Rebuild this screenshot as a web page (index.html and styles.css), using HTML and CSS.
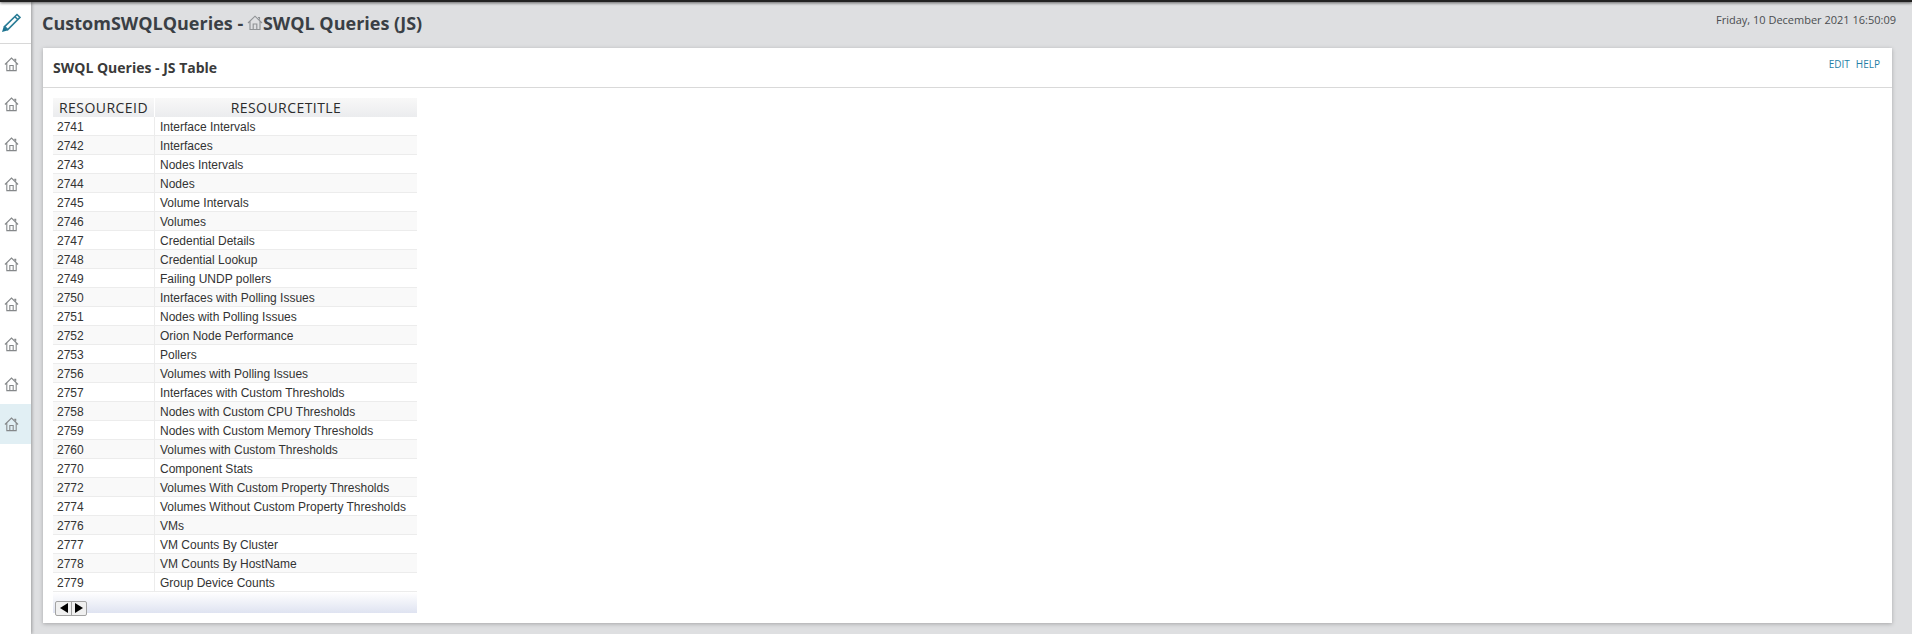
FILE: index.html
```html
<!DOCTYPE html>
<html lang="en">
<head>
<meta charset="utf-8">
<title>CustomSWQLQueries</title>
<link rel="stylesheet" href="styles.css">
</head>
<body>
<svg class="defs" width="0" height="0" aria-hidden="true">
  <symbol id="home" viewBox="0 0 16 16">
    <path d="M1 8 8 1.2 15 8M3 6.6V14.5H13V6.6M6.2 14.5V9H9.8V14.5M11 2.5H12.5V4.6" fill="none" stroke="currentColor" stroke-width="1.15"/>
  </symbol>
</svg>
<div class="topbar"></div>
<div class="app">
  <nav class="sidebar">
    <div class="logo">
      <svg width="20" height="20" viewBox="0 0 20 20" aria-hidden="true">
        <path d="M16 1.5 19 4.3 6.8 16.6 3.6 13.6Z" fill="#fff" stroke="#2b7d97" stroke-width="1.6"/>
        <path d="M13.8 3.7 16.8 6.5" stroke="#2b7d97" stroke-width="1.6"/>
        <path d="M1 19 2.8 13.2 7.2 17.2Z" fill="#1d7390"/>
      </svg>
    </div>
    <a class="nav-item"><svg class="home"><use href="#home"/></svg></a>
    <a class="nav-item"><svg class="home"><use href="#home"/></svg></a>
    <a class="nav-item"><svg class="home"><use href="#home"/></svg></a>
    <a class="nav-item"><svg class="home"><use href="#home"/></svg></a>
    <a class="nav-item"><svg class="home"><use href="#home"/></svg></a>
    <a class="nav-item"><svg class="home"><use href="#home"/></svg></a>
    <a class="nav-item"><svg class="home"><use href="#home"/></svg></a>
    <a class="nav-item"><svg class="home"><use href="#home"/></svg></a>
    <a class="nav-item"><svg class="home"><use href="#home"/></svg></a>
    <a class="nav-item active"><svg class="home"><use href="#home"/></svg></a>
  </nav>
  <main class="content">
    <header class="page-head">
      <h1 class="page-title">CustomSWQLQueries - <svg class="home title-home"><use href="#home"/></svg>SWQL Queries (JS)</h1>
      <div class="datetime">Friday, 10 December 2021 16:50:09</div>
    </header>
    <section class="card">
      <div class="card-head">
        <h2 class="card-title">SWQL Queries - JS Table</h2>
        <div class="card-actions"><a>EDIT</a><a>HELP</a></div>
      </div>
      <div class="card-body">
        <table class="grid">
          <thead>
            <tr><th class="col-id">RESOURCEID</th><th class="col-title">RESOURCETITLE</th></tr>
          </thead>
          <tbody>
            <tr><td>2741</td><td>Interface Intervals</td></tr>
            <tr><td>2742</td><td>Interfaces</td></tr>
            <tr><td>2743</td><td>Nodes Intervals</td></tr>
            <tr><td>2744</td><td>Nodes</td></tr>
            <tr><td>2745</td><td>Volume Intervals</td></tr>
            <tr><td>2746</td><td>Volumes</td></tr>
            <tr><td>2747</td><td>Credential Details</td></tr>
            <tr><td>2748</td><td>Credential Lookup</td></tr>
            <tr><td>2749</td><td>Failing UNDP pollers</td></tr>
            <tr><td>2750</td><td>Interfaces with Polling Issues</td></tr>
            <tr><td>2751</td><td>Nodes with Polling Issues</td></tr>
            <tr><td>2752</td><td>Orion Node Performance</td></tr>
            <tr><td>2753</td><td>Pollers</td></tr>
            <tr><td>2756</td><td>Volumes with Polling Issues</td></tr>
            <tr><td>2757</td><td>Interfaces with Custom Thresholds</td></tr>
            <tr><td>2758</td><td>Nodes with Custom CPU Thresholds</td></tr>
            <tr><td>2759</td><td>Nodes with Custom Memory Thresholds</td></tr>
            <tr><td>2760</td><td>Volumes with Custom Thresholds</td></tr>
            <tr><td>2770</td><td>Component Stats</td></tr>
            <tr><td>2772</td><td>Volumes With Custom Property Thresholds</td></tr>
            <tr><td>2774</td><td>Volumes Without Custom Property Thresholds</td></tr>
            <tr><td>2776</td><td>VMs</td></tr>
            <tr><td>2777</td><td>VM Counts By Cluster</td></tr>
            <tr><td>2778</td><td>VM Counts By HostName</td></tr>
            <tr><td>2779</td><td>Group Device Counts</td></tr>
          </tbody>
        </table>
        <div class="pager">
          <div class="pager-btns">
            <button class="pager-btn" type="button" aria-label="Previous"><span class="tri-left"></span></button>
            <button class="pager-btn" type="button" aria-label="Next"><span class="tri-right"></span></button>
          </div>
        </div>
      </div>
    </section>
  </main>
</div>
</body>
</html>
```
FILE: styles.css
```css
* { box-sizing: border-box; }
html, body { margin: 0; height: 100%; overflow: hidden; }
body { background: #dedfe1; font-family: "Open Sans", sans-serif; color: #333; }
.defs { position: absolute; }
.topbar { height: 2px; background: #222; box-shadow: 0 1px 3px rgba(0,0,0,.7); position: relative; z-index: 2; }
.app { display: flex; height: 632px; }
.sidebar { width: 31px; flex: none; background: #fff; box-shadow: 1px 0 3px rgba(0,0,0,.3); position: relative; }
.logo { height: 42px; border-bottom: 1px solid #d8d8d8; display: flex; align-items: center; justify-content: center; padding-right: 9px; }
.nav-item { height: 40px; display: flex; align-items: center; justify-content: center; color: #85888a; padding-right: 9px; }
.nav-item.active { background: #e1eff4; }
.home { width: 15px; height: 15px; display: block; flex: none; }
.content { flex: 1; min-width: 0; padding: 0 20px 0 12px; }
.page-head { height: 46px; display: flex; justify-content: space-between; align-items: flex-start; }
.page-title { margin: 9px 0 0 -1px; font-size: 18px; line-height: 24px; font-weight: 700; color: #3a3f45; display: flex; align-items: center; white-space: pre; }
.title-home { width: 16px; height: 16px; margin: 0 0 0 -1px; color: #909396; }
.datetime { font-size: 11px; line-height: 16px; margin-top: 10px; margin-right: -4px; color: #4a4d50; }
.card { height: 575px; background: #fff; box-shadow: 0 1px 4px rgba(0,0,0,.25); }
.card-head { height: 40px; border-bottom: 1px solid #d9d9d9; display: flex; justify-content: space-between; padding: 0 12px 0 10px; }
.card-title { margin: 10px 0 0; font-size: 14px; line-height: 19px; font-weight: 700; color: #3a3a3a; }
.card-actions { display: flex; gap: 6px; margin-top: 10px; font-size: 10px; line-height: 13px; color: #1f7fa6; }
.card-body { padding: 10px; }
.grid { width: 364px; border-collapse: separate; border-spacing: 0; table-layout: fixed; font-family: "Liberation Sans", Arial, sans-serif; }
.grid th { height: 19px; padding: 0; font-family: "Open Sans", sans-serif; font-size: 14px; letter-spacing: .45px; font-weight: 400; color: #2b2b2b; background: linear-gradient(#f8f8f8, #ebecee); text-align: center; border-left: 1px solid #fff; line-height: 18px; }
.grid th:first-child { border-left: none; }
.col-id { width: 101px; }
.grid td { height: 19px; padding: 2px 4px 0 4px; font-size: 12px; line-height: 16px; color: #333; border-bottom: 1px solid #ececec; white-space: nowrap; }
.grid td + td { padding-left: 5px; border-left: 1px solid #ececec; }
.grid tbody tr:nth-child(even) td { background: #f9f9f9; }
.pager { width: 364px; height: 21px; padding: 4px 0 0 2px; background: linear-gradient(#fff, #dfe3f1); }
.pager-btns { display: inline-flex; border: 1px solid #a3a3a3; border-radius: 2px; background: #f0f0f0; height: 15px; }
.pager-btn { width: 15px; height: 13px; padding: 0; border: none; background: none; display: flex; align-items: center; justify-content: center; }
.pager-btn + .pager-btn { border-left: 1px solid #a3a3a3; }
.tri-left { width: 0; height: 0; border: 5px solid transparent; border-left: none; border-right: 8px solid #000; }
.tri-right { width: 0; height: 0; border: 5px solid transparent; border-right: none; border-left: 8px solid #000; }
```
